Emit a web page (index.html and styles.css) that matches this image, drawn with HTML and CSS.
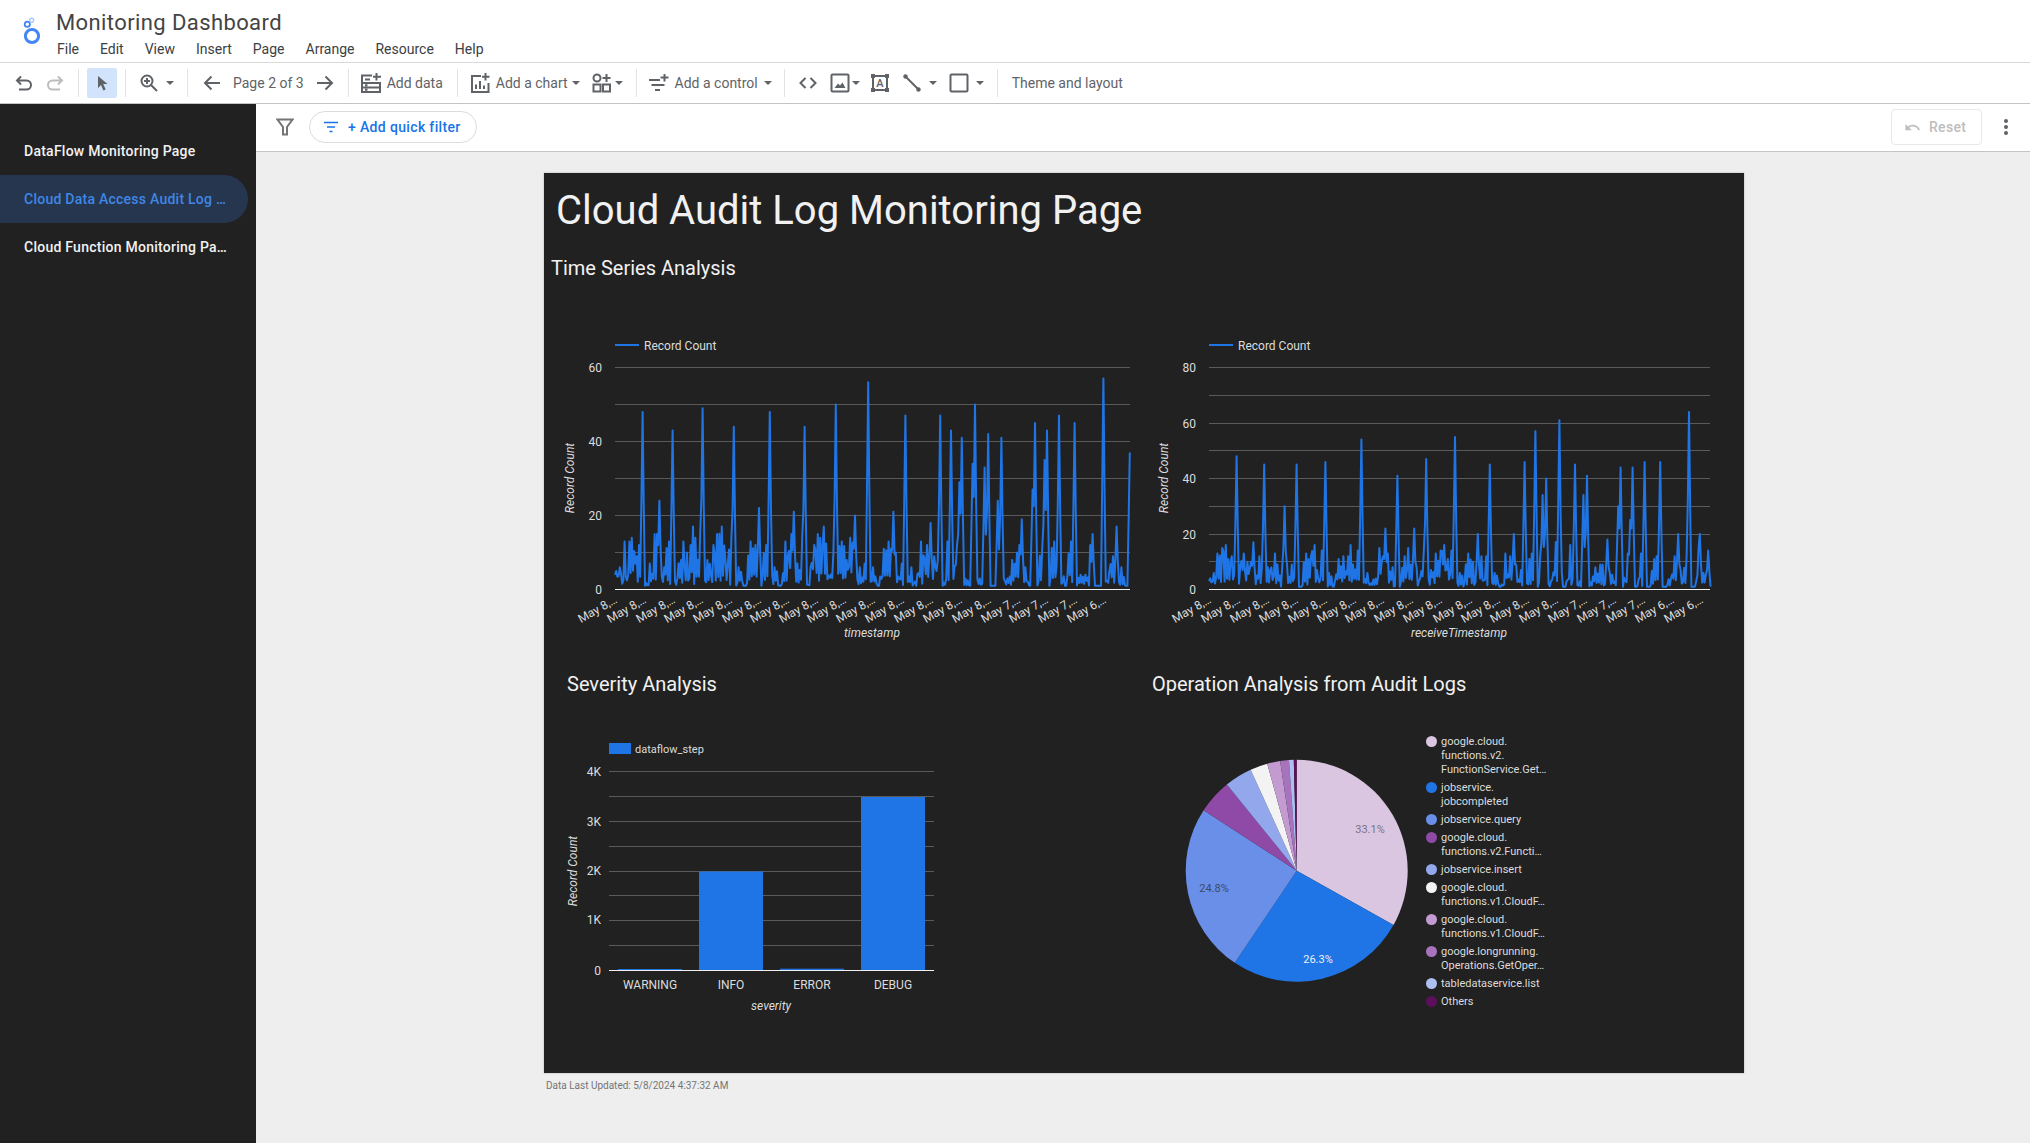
FILE: index.html
```html
<!DOCTYPE html>
<html lang="en">
<head>
  <meta charset="UTF-8">
  <meta name="viewport" content="width=device-width, initial-scale=1.0">
  <title>Monitoring Dashboard</title>
  <link rel="stylesheet" href="styles.css">
</head>
<body>

  <header class="app-header">
    <svg class="logo" viewBox="0 0 24 36">
      <circle class="logo-ring" cx="12" cy="25" r="6.6"/>
      <circle class="logo-mid" cx="7.3" cy="13.3" r="2.6"/>
      <circle class="logo-small" cx="11.7" cy="9.3" r="2"/>
    </svg>
    <div class="app-title">
      <div class="doc-name">Monitoring Dashboard</div>
      <nav class="menu">
        <span>File</span><span>Edit</span><span>View</span><span>Insert</span><span>Page</span><span>Arrange</span><span>Resource</span><span>Help</span>
      </nav>
    </div>
  </header>

  <div class="toolbar">
    <div class="group g-history">
      <svg class="ico" viewBox="0 0 20 20"><path d="M7 3.500 3 7.500l4 4M3 7.500h9.500a4.500 4.500 0 0 1 0 9H5"/></svg>
      <svg class="ico off" viewBox="0 0 20 20"><path d="M13 3.500l4 4-4 4M17 7.500H7.500a4.500 4.500 0 0 0 0 9H15"/></svg>
    </div>
    <i class="sep"></i>
    <div class="group g-select">
      <div class="select-btn"><svg class="ico solid" viewBox="0 0 20 20"><path d="M6 3l9.500 8h-4.300l2.500 5.600-2.300 1-2.400-5.700L6 15z"/></svg></div>
    </div>
    <i class="sep"></i>
    <div class="group">
      <div class="tool wide">
        <svg class="ico" viewBox="0 0 20 20"><circle cx="8" cy="8" r="5.500"/><path d="M8 5v6M5 8h6M12 12l6 6"/></svg>
        <svg class="caret" viewBox="0 0 8 4"><path d="M0 0h8L4 4z"/></svg>
      </div>
    </div>
    <i class="sep"></i>
    <div class="group g-pages">
      <svg class="ico" viewBox="0 0 20 20"><path d="M18 10H3M9.500 3.500 3 10l6.500 6.500"/></svg>
      <span class="tool-text">Page 2 of 3</span>
      <svg class="ico" viewBox="0 0 20 20"><path d="M2 10h15M10.500 3.500 17 10l-6.500 6.500"/></svg>
    </div>
    <i class="sep"></i>
    <div class="group g-data">
      <div class="tool">
        <svg class="ico" viewBox="0 0 20 20"><path d="M11 2.500H1v16.500h18v-9H1M1 14.500h18M4 6.500h5M4 12.200h2.500M4 16.800h2.500M15.500 0v7.500M12 3.700h8"/></svg>
        <span class="tool-text">Add data</span>
      </div>
    </div>
    <i class="sep"></i>
    <div class="group g-chart">
      <div class="tool">
        <svg class="ico" viewBox="0 0 20 20"><path d="M11 3H2v16h16.500v-9M6 11.500V16M10 8v8M14 12.500V16M15.500 0v7.500M12 3.700h7.500"/></svg>
        <span class="tool-text">Add a chart</span>
        <svg class="caret pull" viewBox="0 0 8 4"><path d="M0 0h8L4 4z"/></svg>
      </div>
      <div class="tool">
        <svg class="ico" viewBox="0 0 20 20"><circle cx="5" cy="5" r="3.500"/><path d="M14.500 1v8M10.500 5h8"/><rect x="1.500" y="11.500" width="7" height="7"/><rect x="11" y="11.500" width="7" height="7"/></svg>
        <svg class="caret pull-more" viewBox="0 0 8 4"><path d="M0 0h8L4 4z"/></svg>
      </div>
    </div>
    <i class="sep"></i>
    <div class="group g-control">
      <div class="tool">
        <svg class="ico" viewBox="0 0 20 20"><path d="M0 7h11M2.500 12h13M6 17h5M15.500 1v7.500M11.500 4.500h8"/></svg>
        <span class="tool-text">Add a control</span>
        <svg class="caret" viewBox="0 0 8 4"><path d="M0 0h8L4 4z"/></svg>
      </div>
    </div>
    <i class="sep"></i>
    <div class="group g-shapes">
      <svg class="ico" viewBox="0 0 20 20"><path d="M7.500 5l-5 5 5 5M12.500 5l5 5-5 5"/></svg>
      <div class="tool tight">
        <svg class="ico" viewBox="0 0 20 20"><rect x="1.500" y="1.500" width="17" height="17" rx="1"/><path class="fill" d="M4.500 15l3.500-4.500 2 2 2.500-3 3 5.500z"/></svg>
        <svg class="caret" viewBox="0 0 8 4"><path d="M0 0h8L4 4z"/></svg>
      </div>
      <svg class="ico" viewBox="0 0 20 20">
        <rect x="3" y="3" width="14" height="14"/>
        <path class="fill" d="M1 1h4v4H1zM15 1h4v4h-4zM1 15h4v4H1zM15 15h4v4h-4z"/>
        <text class="ico-letter" x="10" y="14.300">A</text>
      </svg>
      <div class="tool wide">
        <svg class="ico" viewBox="0 0 20 20"><path d="M3 3l14 14"/><circle class="fill" cx="3.500" cy="3.500" r="2.200"/><circle class="fill" cx="16.500" cy="16.500" r="2.200"/></svg>
        <svg class="caret" viewBox="0 0 8 4"><path d="M0 0h8L4 4z"/></svg>
      </div>
      <div class="tool wide">
        <svg class="ico" viewBox="0 0 20 20"><rect x="1.500" y="1.500" width="17" height="17" rx="1"/></svg>
        <svg class="caret" viewBox="0 0 8 4"><path d="M0 0h8L4 4z"/></svg>
      </div>
    </div>
    <i class="sep"></i>
    <div class="group g-theme"><span class="tool-text">Theme and layout</span></div>
  </div>

  <div class="workspace">
    <aside class="page-list">
      <div class="page-item">DataFlow Monitoring Page</div>
      <div class="page-item active">Cloud Data Access Audit Log …</div>
      <div class="page-item">Cloud Function Monitoring Pa…</div>
    </aside>

    <main class="stage">
      <div class="filter-bar">
        <svg class="funnel" viewBox="0 0 18 18"><path d="M1.500 1.500h15L11 9v7.500H7V9z"/></svg>
        <div class="quick-filter">
          <svg class="filter-lines" viewBox="0 0 14 12"><path d="M0 1.500h14M3 6h8M5.500 10.500h3"/></svg>
          <span>+ Add quick filter</span>
        </div>
        <div class="reset">
          <svg class="reset-ico" viewBox="0 0 24 24"><path d="M12.500 8c-2.650 0-5.050.99-6.900 2.600L2 7v9h9l-3.620-3.620c1.390-1.160 3.160-1.880 5.120-1.880 3.540 0 6.550 2.310 7.600 5.500l2.370-.78C21.080 11.030 17.150 8 12.500 8z"/></svg>
          <span>Reset</span>
        </div>
        <svg class="kebab" viewBox="0 0 4 16"><circle cx="2" cy="2" r="2"/><circle cx="2" cy="8" r="2"/><circle cx="2" cy="14" r="2"/></svg>
      </div>

      <div class="canvas">
        <section class="report">
          <h1>Cloud Audit Log Monitoring Page</h1>
          <h2 class="series-title">Time Series Analysis</h2>

          <div class="series-row">
            <svg class="chart chart-left" viewBox="551 330 589 320">
              <path class="grid" d="M615 367.500H1130M615 404.500H1130M615 441.500H1130M615 478.500H1130M615 515.500H1130M615 552.500H1130"/>
              <g id="line-timestamp"></g>
              <path class="axis" d="M615 589.500H1130"/>
              <path class="legend-line" d="M615 345H639"/>
              <text class="legend" x="644" y="350">Record Count</text>
              <text class="num" x="602" y="371.500">60</text>
              <text class="num" x="602" y="445.500">40</text>
              <text class="num" x="602" y="519.500">20</text>
              <text class="num" x="602" y="593.500">0</text>
              <text class="axis-title" transform="translate(574 478) rotate(-90)">Record Count</text>
              <text class="axis-title" x="872" y="637">timestamp</text>
              <text class="tick" transform="translate(618 602) rotate(-30)">May 8,…</text>
              <text class="tick" transform="translate(647 602) rotate(-30)">May 8,…</text>
              <text class="tick" transform="translate(676 602) rotate(-30)">May 8,…</text>
              <text class="tick" transform="translate(704 602) rotate(-30)">May 8,…</text>
              <text class="tick" transform="translate(733 602) rotate(-30)">May 8,…</text>
              <text class="tick" transform="translate(762 602) rotate(-30)">May 8,…</text>
              <text class="tick" transform="translate(790 602) rotate(-30)">May 8,…</text>
              <text class="tick" transform="translate(819 602) rotate(-30)">May 8,…</text>
              <text class="tick" transform="translate(847 602) rotate(-30)">May 8,…</text>
              <text class="tick" transform="translate(876 602) rotate(-30)">May 8,…</text>
              <text class="tick" transform="translate(905 602) rotate(-30)">May 8,…</text>
              <text class="tick" transform="translate(934 602) rotate(-30)">May 8,…</text>
              <text class="tick" transform="translate(963 602) rotate(-30)">May 8,…</text>
              <text class="tick" transform="translate(992 602) rotate(-30)">May 8,…</text>
              <text class="tick" transform="translate(1021 602) rotate(-30)">May 7,…</text>
              <text class="tick" transform="translate(1049 602) rotate(-30)">May 7,…</text>
              <text class="tick" transform="translate(1078 602) rotate(-30)">May 7,…</text>
              <text class="tick" transform="translate(1107 602) rotate(-30)">May 6,…</text>
            </svg>

            <svg class="chart chart-right" viewBox="1140 330 590 320">
              <path class="grid" d="M1209 367.500H1710M1209 395.500H1710M1209 423.500H1710M1209 450.500H1710M1209 478.500H1710M1209 506.500H1710M1209 534.500H1710M1209 561.500H1710"/>
              <g id="line-receive"></g>
              <path class="axis" d="M1209 589.500H1710"/>
              <path class="legend-line" d="M1209 345H1233"/>
              <text class="legend" x="1238" y="350">Record Count</text>
              <text class="num" x="1196" y="371.500">80</text>
              <text class="num" x="1196" y="427.500">60</text>
              <text class="num" x="1196" y="482.500">40</text>
              <text class="num" x="1196" y="538.500">20</text>
              <text class="num" x="1196" y="593.500">0</text>
              <text class="axis-title" transform="translate(1168 478) rotate(-90)">Record Count</text>
              <text class="axis-title" x="1459" y="637">receiveTimestamp</text>
              <text class="tick" transform="translate(1212 602) rotate(-30)">May 8,…</text>
              <text class="tick" transform="translate(1241 602) rotate(-30)">May 8,…</text>
              <text class="tick" transform="translate(1270 602) rotate(-30)">May 8,…</text>
              <text class="tick" transform="translate(1299 602) rotate(-30)">May 8,…</text>
              <text class="tick" transform="translate(1328 602) rotate(-30)">May 8,…</text>
              <text class="tick" transform="translate(1357 602) rotate(-30)">May 8,…</text>
              <text class="tick" transform="translate(1385 602) rotate(-30)">May 8,…</text>
              <text class="tick" transform="translate(1414 602) rotate(-30)">May 8,…</text>
              <text class="tick" transform="translate(1443 602) rotate(-30)">May 8,…</text>
              <text class="tick" transform="translate(1473 602) rotate(-30)">May 8,…</text>
              <text class="tick" transform="translate(1501 602) rotate(-30)">May 8,…</text>
              <text class="tick" transform="translate(1530 602) rotate(-30)">May 8,…</text>
              <text class="tick" transform="translate(1559 602) rotate(-30)">May 8,…</text>
              <text class="tick" transform="translate(1588 602) rotate(-30)">May 7,…</text>
              <text class="tick" transform="translate(1617 602) rotate(-30)">May 7,…</text>
              <text class="tick" transform="translate(1646 602) rotate(-30)">May 7,…</text>
              <text class="tick" transform="translate(1675 602) rotate(-30)">May 6,…</text>
              <text class="tick" transform="translate(1704 602) rotate(-30)">May 6,…</text>
            </svg>
          </div>

          <div class="analysis-row">
            <div class="analysis-col severity-col">
              <h2 class="severity-title">Severity Analysis</h2>
              <svg class="chart chart-bars" viewBox="551 725 400 295">
                <path class="grid" d="M609 771.500H934M609 796.500H934M609 821.500H934M609 846.500H934M609 871.500H934M609 895.500H934M609 920.500H934M609 945.500H934"/>
                <rect class="bar" x="618" y="969" width="64" height="1"/>
                <rect class="bar" x="699" y="871.500" width="64" height="98.500"/>
                <rect class="bar" x="780" y="968.700" width="64" height="1.300"/>
                <rect class="bar" x="861" y="797" width="64" height="173"/>
                <path class="axis" d="M609 970.500H934"/>
                <rect class="bar" x="609" y="743" width="22" height="11"/>
                <text class="legend small" x="635" y="753">dataflow_step</text>
                <text class="num" x="601" y="776">4K</text>
                <text class="num" x="601" y="826">3K</text>
                <text class="num" x="601" y="875">2K</text>
                <text class="num" x="601" y="924">1K</text>
                <text class="num" x="601" y="975">0</text>
                <text class="axis-title" transform="translate(577 871) rotate(-90)">Record Count</text>
                <text class="axis-title" x="771" y="1010">severity</text>
                <text class="cat" x="650" y="989">WARNING</text>
                <text class="cat" x="731" y="989">INFO</text>
                <text class="cat" x="812" y="989">ERROR</text>
                <text class="cat" x="893" y="989">DEBUG</text>
              </svg>
            </div>

            <div class="analysis-col">
              <h2>Operation Analysis from Audit Logs</h2>
              <div class="pie-wrap">
                <svg class="chart chart-pie" viewBox="1152 725 270 295">
                  <g id="pie-operation"></g>
                  <text class="pct pct-light" x="1370" y="833">33.1%</text>
                  <text class="pct pct-white" x="1318" y="963">26.3%</text>
                  <text class="pct pct-dark" x="1214" y="892">24.8%</text>
                </svg>
                <ul class="pie-legend">
                  <li><i class="dot d1"></i><span>google.cloud.<br>functions.v2.<br>FunctionService.Get…</span></li>
                  <li><i class="dot d2"></i><span>jobservice.<br>jobcompleted</span></li>
                  <li><i class="dot d3"></i><span>jobservice.query</span></li>
                  <li><i class="dot d4"></i><span>google.cloud.<br>functions.v2.Functi…</span></li>
                  <li><i class="dot d5"></i><span>jobservice.insert</span></li>
                  <li><i class="dot d6"></i><span>google.cloud.<br>functions.v1.CloudF…</span></li>
                  <li><i class="dot d7"></i><span>google.cloud.<br>functions.v1.CloudF…</span></li>
                  <li><i class="dot d8"></i><span>google.longrunning.<br>Operations.GetOper…</span></li>
                  <li><i class="dot d9"></i><span>tabledataservice.list</span></li>
                  <li><i class="dot d10"></i><span>Others</span></li>
                </ul>
              </div>
            </div>
          </div>
        </section>
        <div class="last-updated">Data Last Updated: 5/8/2024 4:37:32 AM</div>
      </div>
    </main>
  </div>

  <script src="script.js"></script>
</body>
</html>
```

FILE: styles.css
```css
:root {
  --ink: #5f6368;
  --rule: #c4c4c4;
  --soft-rule: #e3e3e3;
  --dark: #212121;
  --blue: #1f75e6;
}

* {
  box-sizing: border-box;
}

body {
  font-family: 'Roboto', sans-serif;
  margin: 0;
  height: 100vh;
  display: flex;
  flex-direction: column;
  overflow: hidden;
  background: #fff;
}

/* top of the app */
.app-header {
  height: 63px;
  flex: none;
  display: flex;
  border-bottom: 1px solid #dadada;
  padding-left: 20px;
}

.logo {
  width: 24px;
  height: 36px;
  margin-top: 11px;
}

.logo-ring,
.logo-mid,
.logo-small {
  fill: none;
}

.logo-ring {
  stroke: #4285f4;
  stroke-width: 3;
}

.logo-mid {
  stroke: #4285f4;
  stroke-width: 1.8;
}

.logo-small {
  stroke: #a8c7fa;
  stroke-width: 1.4;
}

.app-title {
  margin-left: 12px;
  padding-top: 9px;
}

.doc-name {
  font-size: 22px;
  line-height: 28px;
  color: #444;
  letter-spacing: 0.4px;
}

.menu {
  display: flex;
  gap: 21px;
  padding-left: 1px;
  font-size: 14px;
  line-height: 25px;
  color: #3c4043;
}

/* toolbar */
.toolbar {
  height: 41px;
  flex: none;
  display: flex;
  align-items: center;
  padding-left: 14px;
  border-bottom: 1px solid var(--rule);
}

.group {
  display: flex;
  align-items: center;
  padding: 0 13px;
}

.g-history {
  padding: 0 13px 0 0;
  gap: 11px;
}

.g-select {
  padding: 0 8px;
}

.g-pages {
  gap: 11px;
  padding: 0 13px 0 14px;
}

.g-data {
  padding: 0 14px 0 12px;
}

.g-chart {
  gap: 12px;
  padding: 0 13px 0 12px;
}

.g-control {
  padding: 0 12px;
}

.g-shapes {
  gap: 12px;
}

.g-theme {
  padding-left: 14px;
}

.sep {
  width: 1px;
  height: 28px;
  background: var(--soft-rule);
}

.tool {
  display: flex;
  align-items: center;
  gap: 6px;
}

.tool.tight {
  gap: 2px;
  margin-right: -2px;
}

.tool.wide {
  gap: 7px;
}

.tool-text {
  font-size: 14px;
  color: var(--ink);
  white-space: nowrap;
}

.ico {
  width: 20px;
  height: 20px;
  flex: none;
  fill: none;
  stroke: var(--ink);
  stroke-width: 2;
}

.ico .fill {
  fill: var(--ink);
  stroke: none;
}

.ico-letter {
  font-size: 11px;
  font-weight: 500;
  text-anchor: middle;
  fill: var(--ink);
  stroke: none;
}

.ico.off {
  stroke: #bdbdbd;
}

.ico.solid {
  fill: var(--ink);
  stroke: none;
}

.select-btn {
  width: 30px;
  height: 30px;
  border-radius: 2px;
  background: #d2e3fc;
  display: flex;
  align-items: center;
  justify-content: center;
}

.caret {
  width: 8px;
  height: 4px;
  flex: none;
  fill: var(--ink);
}

.caret.pull {
  margin-left: -2px;
}

.caret.pull-more {
  margin-left: -3px;
}

/* page list + stage */
.workspace {
  flex: 1;
  display: flex;
  min-height: 0;
}

.page-list {
  width: 256px;
  flex: none;
  background: var(--dark);
  padding-top: 23px;
}

.page-item {
  width: 248px;
  height: 48px;
  padding-left: 24px;
  border-radius: 0 24px 24px 0;
  font-size: 14px;
  font-weight: 500;
  letter-spacing: 0.25px;
  line-height: 48px;
  color: #f1f1f1;
  white-space: nowrap;
}

.page-item.active {
  background: #26364f;
  color: #3f87e5;
}

.stage {
  flex: 1;
  display: flex;
  flex-direction: column;
  min-width: 0;
}

.filter-bar {
  height: 48px;
  flex: none;
  display: flex;
  align-items: center;
  padding: 0 0 1px 20px;
  border-bottom: 1px solid var(--rule);
}

.funnel {
  width: 18px;
  height: 18px;
  fill: none;
  stroke: #757575;
  stroke-width: 2;
}

.quick-filter {
  display: flex;
  align-items: center;
  gap: 10px;
  height: 32px;
  width: 168px;
  margin-left: 15px;
  padding-left: 14px;
  border: 1px solid #dadce0;
  border-radius: 16px;
  font-size: 14px;
  font-weight: 500;
  letter-spacing: 0.35px;
  color: #1a73e8;
  white-space: nowrap;
}

.filter-lines {
  width: 14px;
  height: 12px;
  fill: none;
  stroke: #1a73e8;
  stroke-width: 1.600;
}

.reset {
  display: flex;
  align-items: center;
  gap: 8px;
  width: 91px;
  height: 36px;
  margin-left: auto;
  padding-left: 12px;
  border: 1px solid #e8e8e8;
  border-radius: 4px;
  font-size: 14px;
  font-weight: 500;
  letter-spacing: 0.3px;
  color: #bdbdbd;
}

.reset-ico {
  width: 17px;
  height: 17px;
  fill: #bdbdbd;
}

.kebab {
  width: 4px;
  height: 16px;
  margin: 0 22px;
  fill: #5f6368;
}

.canvas {
  flex: 1;
  background: #eee;
  padding: 21px 0 0 288px;
}

/* report */
.report {
  width: 1200px;
  height: 900px;
  background: var(--dark);
  padding: 14px 0 0 7px;
  color: #f1f1f1;
  box-shadow: 0 0 2px rgba(0, 0, 0, 0.25);
}

.report h1 {
  margin: 0 0 0 5px;
  font-size: 40px;
  font-weight: 400;
  line-height: 48px;
}

.report h2 {
  margin: 0;
  font-size: 20px;
  font-weight: 400;
  line-height: 24px;
}

.series-title {
  padding-top: 21px;
}

.report .series-title {
  margin-bottom: 50px;
}

.series-row {
  display: flex;
}

.analysis-row {
  display: flex;
  margin-top: 22px;
}

.analysis-col {
  flex: 1;
}

.severity-col {
  flex: 0 0 601px;
}

.report .severity-title {
  padding-left: 16px;
}

.chart {
  display: block;
  font-family: 'Roboto', sans-serif;
}

.chart-left {
  width: 589px;
  height: 320px;
}

.chart-right {
  width: 590px;
  height: 320px;
}

.chart-bars {
  width: 400px;
  height: 295px;
  margin-top: 29px;
}

.pie-wrap {
  display: flex;
  margin-top: 29px;
}

.chart-pie {
  width: 270px;
  height: 295px;
  flex: none;
}

.grid {
  stroke: #5a5a5a;
  stroke-width: 1;
}

.axis {
  stroke: #f1f1f1;
  stroke-width: 1;
}

.legend-line {
  stroke: var(--blue);
  stroke-width: 2;
}

.series-line {
  fill: none;
  stroke: var(--blue);
  stroke-width: 2;
  stroke-linejoin: round;
}

.bar {
  fill: var(--blue);
}

.legend,
.num,
.tick,
.cat,
.axis-title {
  font-size: 12px;
  fill: #dcdcdc;
}

.legend.small {
  font-size: 11px;
}

.num,
.tick {
  text-anchor: end;
}

.cat,
.axis-title {
  text-anchor: middle;
}

.axis-title {
  font-style: italic;
}

.pct {
  font-size: 11px;
  text-anchor: middle;
}

.pct-light {
  fill: #7d7383;
}

.pct-white {
  fill: #f1f1f1;
}

.pct-dark {
  fill: #3c4a68;
}

.pie-legend {
  list-style: none;
  margin: 10px 0 0 4px;
  padding: 0;
  display: flex;
  flex-direction: column;
  gap: 4px;
  font-size: 11px;
  line-height: 14px;
  color: #dcdcdc;
  white-space: nowrap;
}

.pie-legend li {
  display: flex;
  gap: 4px;
}

.dot {
  width: 11px;
  height: 11px;
  flex: none;
  margin-top: 1px;
  border-radius: 50%;
}

.d1 { background: #dac6e0; }
.d2 { background: #1f75e6; }
.d3 { background: #6a8fe8; }
.d4 { background: #8e4aa6; }
.d5 { background: #93a8ec; }
.d6 { background: #f3f3f3; }
.d7 { background: #c39bd0; }
.d8 { background: #a873bd; }
.d9 { background: #adbef0; }
.d10 { background: #5c0f5c; }

.last-updated {
  margin: 6px 0 0 2px;
  font-size: 10px;
  line-height: 14px;
  color: #757575;
}
```

FILE: script.js
```js
// spikes and clusters are [x in the 2.613x crop of the chart, value]
const lineCharts = [
  {
    id: 'line-timestamp', left: 615, right: 1130, origin: 545, top: 367.5, base: 589.5, max: 60, start: 4,
    spikes: [[255,48],[300,24],[333,43],[412,49],[494,44],[558,22],[586,48],[649,21],[678,44],[760,50],[810,20],[843,56],[911,21],[942,47],[1007,18],[1034,47],[1061,43],[1082,29],[1090,41],[1118,34],[1125,50],[1150,33],[1158,42],[1184,24],[1194,41],[1246,19],[1274,27],[1279,45],[1305,35],[1313,43],[1343,47],[1384,45],[1432,15],[1459,57],[1493,17],[1527,37]],
    clusters: [[185,5],[195,6],[207,13],[220,13],[228,14],[236,7],[246,12],[275,7],[285,15],[292,15],[310,6],[325,13],[345,3],[355,8],[362,13],[372,10],[380,12],[387,17],[393,14],[405,15],[425,8],[440,12],[448,15],[455,15],[461,17],[472,8],[487,14],[507,6],[537,13],[550,12],[578,12],[600,6],[627,13],[635,9],[645,15],[660,7],[672,14],[695,6],[704,12],[712,15],[718,14],[728,17],[735,7],[755,10],[776,13],[788,8],[798,14],[807,11],[822,6],[835,7],[858,6],[885,11],[890,8],[897,13],[905,11],[918,10],[933,7],[956,6],[983,13],[998,12],[1016,9],[1027,8],[1050,13],[1075,12],[1080,15],[1100,3],[1135,3],[1200,3],[1208,3],[1220,8],[1232,10],[1240,12],[1255,6],[1285,2],[1298,11],[1332,13],[1347,10],[1375,13],[1400,4],[1412,4],[1425,12],[1475,5],[1485,9],[1505,6]]
  },
  {
    id: 'line-receive', left: 1209, right: 1710, origin: 1145, top: 367.5, base: 589.5, max: 80, start: 3,
    spikes: [[240,48],[284,17],[311,45],[365,30],[397,45],[472,46],[566,54],[629,22],[658,41],[703,22],[734,47],[810,55],[870,20],[900,45],[964,20],[992,46],[1021,57],[1040,34],[1049,40],[1084,61],[1123,45],[1147,34],[1154,41],[1207,18],[1236,30],[1242,44],[1267,25],[1274,44],[1304,46],[1346,46],[1392,20],[1421,64],[1450,20],[1472,14]],
    clusters: [[170,4],[180,6],[188,13],[201,15],[211,16],[218,11],[228,12],[250,8],[258,13],[268,10],[277,10],[300,12],[322,8],[330,8],[340,13],[357,8],[372,9],[385,9],[420,13],[427,11],[435,12],[444,16],[451,7],[463,14],[482,6],[506,11],[517,12],[530,12],[537,16],[545,9],[556,14],[580,6],[602,4],[611,15],[622,12],[636,13],[647,8],[679,12],[687,15],[695,9],[710,8],[727,14],[748,7],[760,13],[772,14],[783,16],[790,11],[801,14],[823,6],[846,13],[858,10],[865,10],[878,12],[890,12],[913,6],[942,13],[955,12],[971,9],[984,7],[1005,11],[1012,13],[1032,12],[1060,3],[1072,12],[1079,25],[1112,16],[1135,3],[1170,3],[1178,8],[1188,9],[1197,9],[1215,6],[1228,3],[1262,13],[1295,13],[1332,11],[1338,12],[1373,4],[1385,12],[1400,7],[1415,12],[1445,15],[1460,6]]
  }
];

// end angle in degrees, clockwise from 12 o'clock
const pieSlices = [
  ['#dac6e0', 119.3], ['#1f75e6', 213.9], ['#6a8fe8', 303], ['#8e4aa6', 321], ['#93a8ec', 335.5],
  ['#f3f3f3', 344.6], ['#c39bd0', 351.4], ['#a873bd', 356], ['#adbef0', 358.5], ['#5c0f5c', 360]
];

const SVG_NS = 'http://www.w3.org/2000/svg';

let seed = 17;
function rnd() {
  seed = (seed * 16807) % 2147483647;
  return seed / 2147483647;
}

function drawLine(c) {
  const step = 1.2;
  const count = Math.round((c.right - c.left) / step) + 1;
  const vals = new Array(count).fill(1);
  const toIndex = z => Math.round((c.origin + z / 2.613 - c.left) / step);
  const put = (i, v) => { if (i >= 0 && i < count) vals[i] = Math.max(vals[i], v); };

  c.clusters.forEach(([z, v]) => {
    const i = toIndex(z);
    for (let j = -3; j <= 3; j++) {
      put(i + j, 1 + rnd() * (v - 1) * (j % 2 ? 0.3 : 0.9));
    }
    put(i, v);
  });
  c.spikes.forEach(([z, v]) => {
    const i = toIndex(z);
    put(i, v);
    put(i - 1, v * 0.5);
    put(i + 1, v * 0.45);
  });
  vals[0] = c.start;

  const scale = (c.base - c.top) / c.max;
  const pts = vals.map((v, i) => (c.left + i * step).toFixed(1) + ',' + (c.base - v * scale).toFixed(1));
  const line = document.createElementNS(SVG_NS, 'polyline');
  line.setAttribute('class', 'series-line');
  line.setAttribute('points', pts.join(' '));
  document.getElementById(c.id).appendChild(line);
}

function drawPie(el, cx, cy, r) {
  let from = 0;
  const at = deg => {
    const a = deg * Math.PI / 180;
    return (cx + r * Math.sin(a)).toFixed(2) + ' ' + (cy - r * Math.cos(a)).toFixed(2);
  };
  pieSlices.forEach(([color, to]) => {
    const big = to - from > 180 ? 1 : 0;
    const p = document.createElementNS(SVG_NS, 'path');
    p.setAttribute('d', `M${cx} ${cy}L${at(from)}A${r} ${r} 0 ${big} 1 ${at(to)}Z`);
    p.setAttribute('fill', color);
    el.appendChild(p);
    from = to;
  });
}

lineCharts.forEach(drawLine);
drawPie(document.getElementById('pie-operation'), 1296.7, 870.7, 111);
```
